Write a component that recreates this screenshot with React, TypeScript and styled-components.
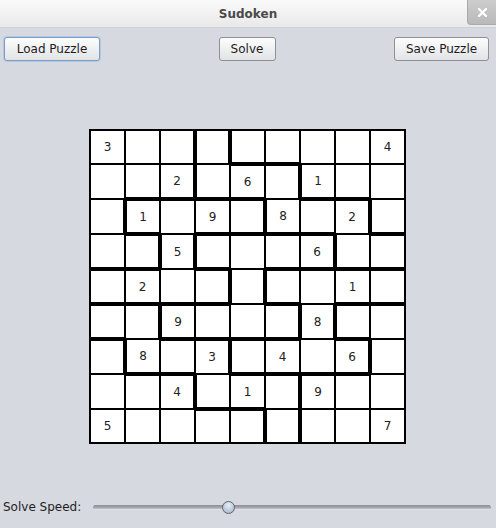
import React from 'react'
import styled, { createGlobalStyle } from 'styled-components'

const GlobalStyle = createGlobalStyle`
  html, body {
    margin: 0;
    padding: 0;
    background: #d6d9df;
  }
  body {
    font-family: "DejaVu Sans", "Liberation Sans", sans-serif;
    font-size: 12px;
    color: #1f1f1f;
  }
`

const Window = styled.div`
  width: 496px;
  height: 528px;
  display: flex;
  flex-direction: column;
  background: #d6d9df;
  overflow: hidden;
`

const TitleBar = styled.div`
  position: relative;
  height: 28px;
  display: flex;
  align-items: center;
  justify-content: center;
  background: linear-gradient(#fafafa, #e9e9e9);
  border-bottom: 1px solid #cfd1d5;
  box-sizing: border-box;
`

const Title = styled.span`
  font-weight: bold;
  font-size: 12px;
  color: #4a4a4a;
  padding-top: 1px;
`

const CloseButton = styled.div`
  position: absolute;
  top: 0;
  right: 0;
  width: 29px;
  height: 25px;
  display: flex;
  align-items: center;
  justify-content: center;
  background: linear-gradient(#cdcdcd, #b9b9b9);
  border-left: 1px solid #a9a9a9;
  border-bottom: 1px solid #a9a9a9;
  border-bottom-left-radius: 4px;
  box-sizing: border-box;
`

const Toolbar = styled.div`
  display: flex;
  justify-content: space-between;
  align-items: center;
  padding: 9px 7px 0 4px;
`

const Button = styled.button<{ $focused?: boolean; $width: number }>`
  width: ${p => p.$width}px;
  height: 24px;
  padding: 0;
  font-family: "DejaVu Sans", "Liberation Sans", sans-serif;
  font-size: 12px;
  color: #1d1d1d;
  background: linear-gradient(#fdfdfd, #e2e3e6);
  border: 1px solid ${p => (p.$focused ? '#7b9cc4' : '#8d9095')};
  border-radius: 3px;
  box-shadow: ${p => (p.$focused ? '0 0 0 1px #b4c9e2' : 'none')};
`

const Board = styled.div`
  margin: 68px 0 0 89px;
  align-self: flex-start;
  display: grid;
  grid-template-columns: repeat(9, 35px);
  grid-template-rows: 34px repeat(7, 35px) 34px;
  border: 1px solid #000;
  background: #fff;
`

const Cell = styled.div<{ $t: number; $r: number; $b: number; $l: number }>`
  box-sizing: border-box;
  display: flex;
  align-items: center;
  justify-content: center;
  background: #fff;
  border-style: solid;
  border-color: #000;
  border-width: ${p => `${p.$t}px ${p.$r}px ${p.$b}px ${p.$l}px`};
  font-size: 12px;
  color: #222;
`

const Footer = styled.div`
  margin-top: auto;
  display: flex;
  align-items: center;
  gap: 12px;
  padding: 0 5px 11px 3px;
  height: 20px;
`

const Label = styled.span`
  font-size: 12px;
  color: #1f1f1f;
  white-space: nowrap;
`

const Track = styled.div`
  position: relative;
  flex: 1;
  height: 5px;
  border-radius: 3px;
  background: linear-gradient(#8b8e94, #a9acb1 60%, #eef0f3);
`

const Thumb = styled.div`
  position: absolute;
  top: -4px;
  width: 13px;
  height: 13px;
  box-sizing: border-box;
  border-radius: 50%;
  border: 1px solid #5d6670;
  background: radial-gradient(circle at 50% 30%, #e8eef5, #b3c3d4 70%, #9aaec3);
`

// jigsaw regions, one letter per cell
const regions = [
  'AAACDDDDD',
  'AAACCCDDD',
  'ABBBBCCCD',
  'AABEEEECC',
  'BBBBEFFFF',
  'GGEEEEFHH',
  'IGGGFFFFH',
  'IIIGGGHHH',
  'IIIIIGHHH',
]

const givens = [
  '3       4',
  '  2 6 1  ',
  ' 1 9 8 2 ',
  '  5   6  ',
  ' 2     1 ',
  '  9   8  ',
  ' 8 3 4 6 ',
  '  4 1 9  ',
  '5       7',
]

const edge = (r: number, c: number, dr: number, dc: number) => {
  const nr = r + dr
  const nc = c + dc
  if (nr < 0 || nr > 8 || nc < 0 || nc > 8) return 1
  return regions[nr][nc] === regions[r][c] ? 1 : 2
}

const CloseIcon = () => (
  <svg width="9" height="9" viewBox="0 0 9 9">
    <path d="M1 1 L8 8 M8 1 L1 8" stroke="#fff" strokeWidth="2.2" strokeLinecap="square" />
  </svg>
)

const App: React.FC = () => {
  const speed = 0.335

  return (
    <Window>
      <GlobalStyle />
      <TitleBar>
        <Title>Sudoken</Title>
        <CloseButton>
          <CloseIcon />
        </CloseButton>
      </TitleBar>
      <Toolbar>
        <Button $focused $width={96}>Load Puzzle</Button>
        <Button $width={57}>Solve</Button>
        <Button $width={95}>Save Puzzle</Button>
      </Toolbar>
      <Board>
        {givens.map((row, r) =>
          row.split('').map((ch, c) => (
            <Cell
              key={`${r}-${c}`}
              $t={edge(r, c, -1, 0)}
              $r={edge(r, c, 0, 1)}
              $b={edge(r, c, 1, 0)}
              $l={edge(r, c, 0, -1)}
            >
              {ch.trim()}
            </Cell>
          ))
        )}
      </Board>
      <Footer>
        <Label>Solve Speed:</Label>
        <Track>
          <Thumb style={{ left: `calc(${speed} * (100% - 13px))` }} />
        </Track>
      </Footer>
    </Window>
  )
}

export default App
